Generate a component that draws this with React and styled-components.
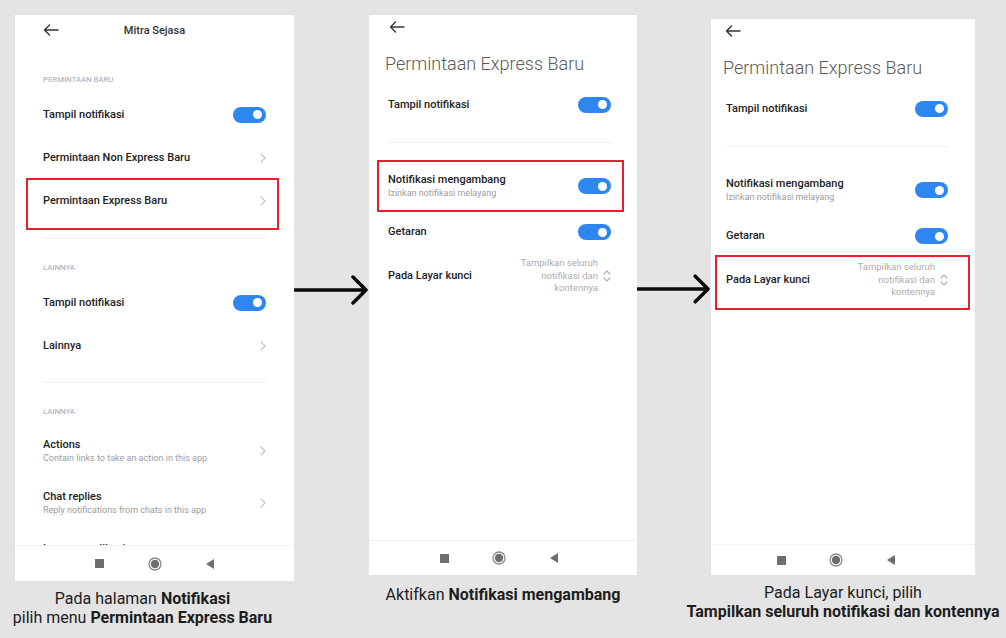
import styled, { createGlobalStyle, css } from 'styled-components';

const GlobalStyle = createGlobalStyle`
  html, body {
    margin: 0;
    padding: 0;
    background: #e4e4e4;
  }
  body {
    font-family: Roboto, "Noto Sans", sans-serif;
  }
`;

const Stage = styled.div`
  display: flex;
  align-items: flex-start;
  width: 1006px;
  height: 638px;
  box-sizing: border-box;
  padding: 15px 0 0 15px;
  overflow: hidden;
  background: #e4e4e4;
`;

const Column = styled.div`
  display: flex;
  flex-direction: column;
  align-items: center;
  flex-shrink: 0;
  width: ${p => p.$w}px;
  margin-top: ${p => p.$top || 0}px;
`;

const Phone = styled.div`
  display: flex;
  flex-direction: column;
  width: 100%;
  height: ${p => p.$h}px;
  background: #fff;
  overflow: hidden;
`;

const Body = styled.div`
  flex: 1;
  min-height: 0;
  overflow: hidden;
  display: flex;
  flex-direction: column;
  padding: 0 ${p => p.$right}px 0 ${p => p.$left}px;
`;

const Header = styled.div`
  display: grid;
  grid-template-columns: 1fr auto 1fr;
  align-items: center;
  height: 30px;
  flex-shrink: 0;
`;

const HeaderTitle = styled.div`
  font-size: 11px;
  font-weight: 500;
  color: #333;
`;

const BackBar = styled.div`
  display: flex;
  align-items: center;
  height: 24px;
  flex-shrink: 0;
  margin-left: ${p => p.$shift || 0}px;
`;

const PageTitle = styled.h1`
  margin: 13px 0 0 -3px;
  font-size: 18px;
  line-height: 24px;
  font-weight: 300;
  color: #5a5a5a;
  white-space: nowrap;
`;

const SectionLabel = styled.div`
  margin: ${p => p.$mt}px 0 8px;
  font-size: 7.8px;
  line-height: 10px;
  color: #a3a6ba;
  flex-shrink: 0;
`;

const Divider = styled.div`
  height: 1px;
  flex-shrink: 0;
  margin-top: ${p => p.$mt}px;
  background: #eeeeee;
`;

const Row = styled.div`
  position: relative;
  display: flex;
  align-items: center;
  justify-content: space-between;
  flex-shrink: 0;
  height: ${p => p.$h || 43}px;
  margin-top: ${p => p.$mt || 0}px;

  ${p => p.$frame && css`
    &::after {
      content: '';
      position: absolute;
      top: ${p.$frame.t}px;
      right: ${p.$frame.r}px;
      bottom: ${p.$frame.b}px;
      left: ${p.$frame.l}px;
      border: 2px solid #e8202e;
      pointer-events: none;
    }
  `}
`;

const Label = styled.div`
  display: flex;
  flex-direction: column;
  gap: 1px;
`;

const Title = styled.div`
  font-size: 11px;
  line-height: 14px;
  font-weight: 500;
  color: #222;
  white-space: nowrap;
`;

const Sub = styled.div`
  font-size: 9px;
  line-height: 11px;
  color: #9d9d9d;
  white-space: nowrap;
`;

const Toggle = styled.span`
  display: flex;
  align-items: center;
  justify-content: flex-end;
  box-sizing: border-box;
  width: 33px;
  height: 16px;
  padding-right: 4px;
  border-radius: 8px;
  background: #2e86f1;
  flex-shrink: 0;
`;

const Knob = styled.span`
  width: 9px;
  height: 9px;
  border-radius: 50%;
  background: #fff;
`;

const Value = styled.div`
  display: flex;
  align-items: center;
  gap: 5px;
`;

const ValueText = styled.div`
  font-size: 9.5px;
  line-height: 12.5px;
  color: #acacac;
  text-align: right;
  white-space: nowrap;
`;

const NavBar = styled.div`
  display: flex;
  justify-content: center;
  align-items: center;
  flex-shrink: 0;
  height: ${p => p.$h}px;
  padding-right: ${p => p.$shift || 0}px;
  border-top: 1px solid #f1f1f1;
`;

const NavKey = styled.div`
  display: flex;
  justify-content: center;
  width: 55px;
`;

const Caption = styled.p`
  margin: ${p => p.$mt}px ${p => p.$shift || 0}px 0 0;
  font-size: 16px;
  line-height: 19px;
  color: #1d1d1d;
  text-align: center;
  white-space: nowrap;

  b {
    font-weight: 700;
  }
`;

const Connector = styled.div`
  display: flex;
  flex-shrink: 0;
  width: ${p => p.$w}px;
  padding-top: ${p => p.$top}px;
`;

const BackArrow = () => (
  <svg width="16" height="12" viewBox="0 0 16 12" fill="none" stroke="#333" strokeWidth="1.4" strokeLinecap="round" strokeLinejoin="round">
    <path d="M15 6H1.5M6.5 1L1.5 6L6.5 11" />
  </svg>
);

const Chevron = () => (
  <svg width="6" height="10" viewBox="0 0 6 10" fill="none" stroke="#c2c2c2" strokeWidth="1.1" strokeLinecap="round" strokeLinejoin="round">
    <polyline points="1,1 5,5 1,9" />
  </svg>
);

const UpDown = () => (
  <svg width="8" height="14" viewBox="0 0 8 14" fill="none" stroke="#b0b0b0" strokeWidth="1.1" strokeLinecap="round" strokeLinejoin="round">
    <polyline points="1,5 4,2 7,5" />
    <polyline points="1,9 4,12 7,9" />
  </svg>
);

const Switch = () => (
  <Toggle><Knob /></Toggle>
);

const Arrow = () => (
  <svg width="75" height="32" viewBox="0 0 75 32" fill="none" stroke="#0a0a0a" strokeWidth="3.5" strokeLinecap="round" strokeLinejoin="round">
    <path d="M1 16H72M59 3L72 16L59 29" />
  </svg>
);

const Nav = ({ h, shift }) => (
  <NavBar $h={h} $shift={shift}>
    <NavKey>
      <svg width="9" height="9"><rect width="9" height="9" fill="#6e6e6e" /></svg>
    </NavKey>
    <NavKey>
      <svg width="14" height="14" viewBox="0 0 14 14">
        <circle cx="7" cy="7" r="6" fill="none" stroke="#8a8a8a" strokeWidth="1.3" />
        <circle cx="7" cy="7" r="4.2" fill="#6e6e6e" />
      </svg>
    </NavKey>
    <NavKey>
      <svg width="8" height="10" viewBox="0 0 8 10"><polygon points="8,0 8,10 0,5" fill="#6e6e6e" /></svg>
    </NavKey>
  </NavBar>
);

const NotificationScreen = () => (
  <Phone $h={566}>
    <Body $left={28} $right={28}>
      <Header>
        <BackArrow />
        <HeaderTitle>Mitra Sejasa</HeaderTitle>
        <span />
      </Header>
      <SectionLabel $mt={30}>PERMINTAAN BARU</SectionLabel>
      <Row>
        <Title>Tampil notifikasi</Title>
        <Switch />
      </Row>
      <Row>
        <Title>Permintaan Non Express Baru</Title>
        <Chevron />
      </Row>
      <Row $frame={{ t: -1, r: -13, b: -8, l: -17 }}>
        <Title>Permintaan Express Baru</Title>
        <Chevron />
      </Row>
      <Divider $mt={16} />
      <SectionLabel $mt={24}>LAINNYA</SectionLabel>
      <Row>
        <Title>Tampil notifikasi</Title>
        <Switch />
      </Row>
      <Row>
        <Title>Lainnya</Title>
        <Chevron />
      </Row>
      <Divider $mt={15} />
      <SectionLabel $mt={24}>LAINNYA</SectionLabel>
      <Row $h={52}>
        <Label>
          <Title>Actions</Title>
          <Sub>Contain links to take an action in this app</Sub>
        </Label>
        <Chevron />
      </Row>
      <Row $h={52}>
        <Label>
          <Title>Chat replies</Title>
          <Sub>Reply notifications from chats in this app</Sub>
        </Label>
        <Chevron />
      </Row>
      <Row $h={52}>
        <Label>
          <Title>Lencana aplikasi</Title>
          <Sub>Tampilkan lencana di ikon aplikasi</Sub>
        </Label>
        <Chevron />
      </Row>
    </Body>
    <Nav h={35} />
  </Phone>
);

const ExpressScreen = ({ h, left, right, backShift, navH, navShift, frameFloat, frameLock }) => (
  <Phone $h={h}>
    <Body $left={left} $right={right}>
      <BackBar $shift={backShift}>
        <BackArrow />
      </BackBar>
      <PageTitle>Permintaan Express Baru</PageTitle>
      <Row $mt={7}>
        <Title>Tampil notifikasi</Title>
        <Switch />
      </Row>
      <Divider $mt={16} />
      <Row $h={52} $mt={17} $frame={frameFloat}>
        <Label>
          <Title>Notifikasi mengambang</Title>
          <Sub>Izinkan notifikasi melayang</Sub>
        </Label>
        <Switch />
      </Row>
      <Row $h={40}>
        <Title>Getaran</Title>
        <Switch />
      </Row>
      <Row $h={48} $frame={frameLock}>
        <Title>Pada Layar kunci</Title>
        <Value>
          <ValueText>
            Tampilkan seluruh<br />notifikasi dan<br />kontennya
          </ValueText>
          <UpDown />
        </Value>
      </Row>
    </Body>
    <Nav h={navH} shift={navShift} />
  </Phone>
);

export default function App() {
  return (
    <>
      <GlobalStyle />
      <Stage>
        <Column $w={279}>
          <NotificationScreen />
          <Caption $mt={8} $shift={24}>
            Pada halaman <b>Notifikasi</b><br />
            pilih menu <b>Permintaan Express Baru</b>
          </Caption>
        </Column>
        <Connector $w={75} $top={259}>
          <Arrow />
        </Connector>
        <Column $w={268}>
          <ExpressScreen
            h={560}
            left={19}
            right={26}
            backShift={1}
            navH={34}
            navShift={8}
            frameFloat={{ t: 0, r: -13, b: 0, l: -11 }}
          />
          <Caption $mt={10}>
            Aktifkan <b>Notifikasi mengambang</b>
          </Caption>
        </Column>
        <Connector $w={74} $top={258}>
          <Arrow />
        </Connector>
        <Column $w={264} $top={4}>
          <ExpressScreen
            h={556}
            left={15}
            right={27}
            backShift={-1}
            navH={30}
            navShift={14}
            frameLock={{ t: -1, r: -22, b: -6, l: -11 }}
          />
          <Caption $mt={8}>
            Pada Layar kunci, pilih<br />
            <b>Tampilkan seluruh notifikasi dan kontennya</b>
          </Caption>
        </Column>
      </Stage>
    </>
  );
}
